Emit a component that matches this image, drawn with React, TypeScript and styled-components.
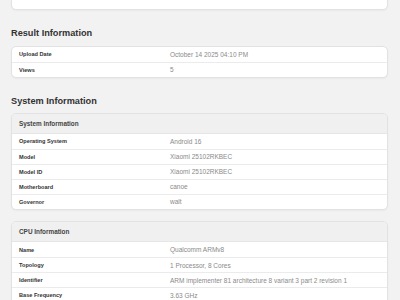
import React from 'react'
import styled, { createGlobalStyle } from 'styled-components'

const GlobalStyle = createGlobalStyle`
  html, body {
    margin: 0;
    padding: 0;
    background: #f2f2f2;
    font-family: "Liberation Sans", Arial, Helvetica, sans-serif;
  }
  #root {
    height: 300px;
    overflow: hidden;
  }
`

type Row = [string, string]

const resultRows: Row[] = [
  ['Upload Date', 'October 14 2025 04:10 PM'],
  ['Views', '5'],
]

const systemRows: Row[] = [
  ['Operating System', 'Android 16'],
  ['Model', 'Xiaomi 25102RKBEC'],
  ['Model ID', 'Xiaomi 25102RKBEC'],
  ['Motherboard', 'canoe'],
  ['Governor', 'walt'],
]

const cpuRows: Row[] = [
  ['Name', 'Qualcomm ARMv8'],
  ['Topology', '1 Processor, 8 Cores'],
  ['Identifier', 'ARM implementer 81 architecture 8 variant 3 part 2 revision 1'],
  ['Base Frequency', '3.63 GHz'],
  ['Cluster 1', '2 Cores @ 4.61 GHz'],
]

const Page = styled.div`
  padding: 0 12px 0 11px;
`

const Card = styled.div`
  background: #fff;
  border: 1px solid #e2e2e2;
  border-radius: 5px;
  box-shadow: 0 1px 2px rgba(0, 0, 0, 0.04);
  overflow: hidden;
  & + & {
    margin-top: 11.7px;
  }
`

const TopCard = styled(Card)`
  margin-top: -10.6px;
  padding: 4px 7px 6.6px;
  font-size: 6.5px;
  line-height: 8px;
  color: #888;
`

const Heading = styled.h2`
  margin: 18px 0 6.5px;
  font-size: 9.2px;
  line-height: 11px;
  font-weight: 700;
  color: #333;
`

const CardHeader = styled.div`
  height: 19.7px;
  display: flex;
  align-items: center;
  padding: 0 7px;
  background: #f0f0f0;
  border-bottom: 1px solid #e6e6e6;
  box-sizing: border-box;
  font-size: 6.4px;
  font-weight: 700;
  color: #444;
`

const InfoRow = styled.div`
  display: grid;
  grid-template-columns: 151px 1fr;
  align-items: center;
  height: 15px;
  padding: 0 7px;
  box-sizing: border-box;
  & + & {
    border-top: 1px solid #ebebeb;
  }
`

const Label = styled.div`
  font-size: 5.6px;
  font-weight: 700;
  color: #333;
  white-space: nowrap;
`

const Value = styled.div`
  font-size: 6.5px;
  color: #8a8a8a;
  white-space: nowrap;
`

const Rows = ({ rows }: { rows: Row[] }) => (
  <>
    {rows.map(([k, v]) => (
      <InfoRow key={k}>
        <Label>{k}</Label>
        <Value>{v}</Value>
      </InfoRow>
    ))}
  </>
)

export default function App() {
  return (
    <>
      <GlobalStyle />
      <Page>
        <TopCard>Geekbench 6.5.0 for Android AArch64</TopCard>

        <Heading>Result Information</Heading>
        <Card>
          <Rows rows={resultRows} />
        </Card>

        <Heading>System Information</Heading>
        <Card>
          <CardHeader>System Information</CardHeader>
          <Rows rows={systemRows} />
        </Card>
        <Card>
          <CardHeader>CPU Information</CardHeader>
          <Rows rows={cpuRows} />
        </Card>
      </Page>
    </>
  )
}
